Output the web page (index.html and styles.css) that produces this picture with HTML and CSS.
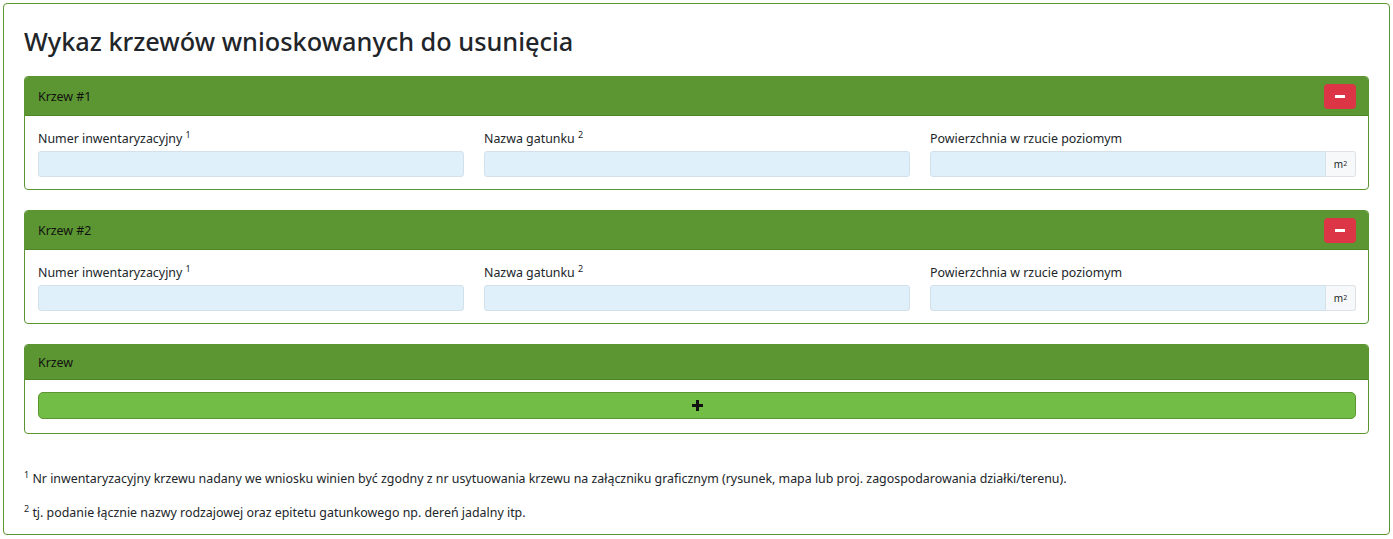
FILE: index.html
```html
<!DOCTYPE html>
<html lang="pl">
<head>
  <meta charset="UTF-8">
  <meta name="viewport" content="width=device-width, initial-scale=1.0">
  <title>Wykaz krzewów</title>
  <link rel="stylesheet" href="styles.css">
</head>
<body>
  <div class="form-panel">
    <h3 class="panel-title">Wykaz krzewów wnioskowanych do usunięcia</h3>

    <div class="shrub-card">
      <div class="shrub-header">
        <span>Krzew #1</span>
        <button class="remove-btn"><span class="minus"></span></button>
      </div>
      <div class="shrub-body">
        <div class="field">
          <label>Numer inwentaryzacyjny <sup>1</sup></label>
          <input type="text" class="input-field">
        </div>
        <div class="field">
          <label>Nazwa gatunku <sup>2</sup></label>
          <input type="text" class="input-field">
        </div>
        <div class="field">
          <label>Powierzchnia w rzucie poziomym</label>
          <div class="input-group">
            <input type="text" class="input-field">
            <span class="addon">m<sup>2</sup></span>
          </div>
        </div>
      </div>
    </div>

    <div class="shrub-card">
      <div class="shrub-header">
        <span>Krzew #2</span>
        <button class="remove-btn"><span class="minus"></span></button>
      </div>
      <div class="shrub-body">
        <div class="field">
          <label>Numer inwentaryzacyjny <sup>1</sup></label>
          <input type="text" class="input-field">
        </div>
        <div class="field">
          <label>Nazwa gatunku <sup>2</sup></label>
          <input type="text" class="input-field">
        </div>
        <div class="field">
          <label>Powierzchnia w rzucie poziomym</label>
          <div class="input-group">
            <input type="text" class="input-field">
            <span class="addon">m<sup>2</sup></span>
          </div>
        </div>
      </div>
    </div>

    <div class="shrub-card">
      <div class="shrub-header">
        <span>Krzew</span>
      </div>
      <div class="shrub-body single">
        <button class="add-btn">
          <svg width="11" height="11" viewBox="0 0 11 11"><path d="M4 0h3v4h4v3H7v4H4V7H0V4h4z" fill="#111"/></svg>
        </button>
      </div>
    </div>

    <div class="footnotes">
      <p><sup>1</sup> Nr inwentaryzacyjny krzewu nadany we wniosku winien być zgodny z nr usytuowania krzewu na załączniku graficznym (rysunek, mapa lub proj. zagospodarowania działki/terenu).</p>
      <p><sup>2</sup> tj. podanie łącznie nazwy rodzajowej oraz epitetu gatunkowego np. dereń jadalny itp.</p>
    </div>
  </div>
</body>
</html>
```

FILE: styles.css
```css
body {
  font-family: 'Noto Sans', 'Open Sans', sans-serif;
  margin: 3px;
  color: #212529;
  background: white;
  font-size: 12.4px;
}

.form-panel {
  border: 1px solid #5c9632;
  border-radius: 4px;
  padding: 20px 20px 11px;
}

.panel-title {
  font-size: 25.3px;
  font-weight: 500;
  line-height: 34px;
  margin: 0 0 18px 0;
  color: #212529;
}

.shrub-card {
  border: 1px solid #5c9632;
  border-radius: 4px;
  margin-bottom: 20px;
  overflow: hidden;
}

.shrub-header {
  background-color: #5c9632;
  border-bottom: 1px solid #4e8529;
  padding: 7px 12px 6px 13px;
  min-height: 21px;
  line-height: 21px;
  display: flex;
  align-items: center;
  justify-content: space-between;
  color: #111;
}

.remove-btn {
  width: 32px;
  height: 25px;
  background-color: #dc3545;
  border: none;
  border-radius: 4px;
  display: flex;
  align-items: center;
  justify-content: center;
  padding: 0;
}

.minus {
  width: 10px;
  height: 3px;
  background: white;
}

.shrub-body {
  display: grid;
  grid-template-columns: repeat(3, 1fr);
  gap: 20px;
  padding: 12px 12px 12px 13px;
}

.shrub-body.single {
  display: block;
  padding: 12px 12px 14px 13px;
}

.field label {
  display: block;
  line-height: 21px;
  margin-bottom: 2px;
}

sup {
  font-size: 9px;
  line-height: 0;
  vertical-align: 5px;
}

.input-field {
  box-sizing: border-box;
  width: 100%;
  height: 26px;
  background-color: #dff0fb;
  border: 1px solid #d4e1ea;
  border-radius: 3px;
  display: block;
  margin: 0;
}

.input-group {
  display: flex;
}

.input-group .input-field {
  border-top-right-radius: 0;
  border-bottom-right-radius: 0;
}

.addon {
  width: 30px;
  flex-shrink: 0;
  box-sizing: border-box;
  height: 26px;
  background: #f7f8f9;
  border: 1px solid #dee2e6;
  border-left: none;
  border-radius: 0 3px 3px 0;
  display: flex;
  align-items: center;
  justify-content: center;
  font-size: 10px;
}

.addon sup {
  font-size: 7px;
  vertical-align: 4px;
}

.add-btn {
  width: 100%;
  height: 27px;
  background-color: #72bd46;
  border: 1px solid #5c9632;
  border-radius: 5px;
  display: flex;
  align-items: center;
  justify-content: center;
  padding: 0;
}

.footnotes {
  padding-top: 15px;
}

.footnotes p {
  margin: 0 0 14px 0;
  line-height: 20px;
}

.footnotes p:last-child {
  margin-bottom: 0;
}
```
